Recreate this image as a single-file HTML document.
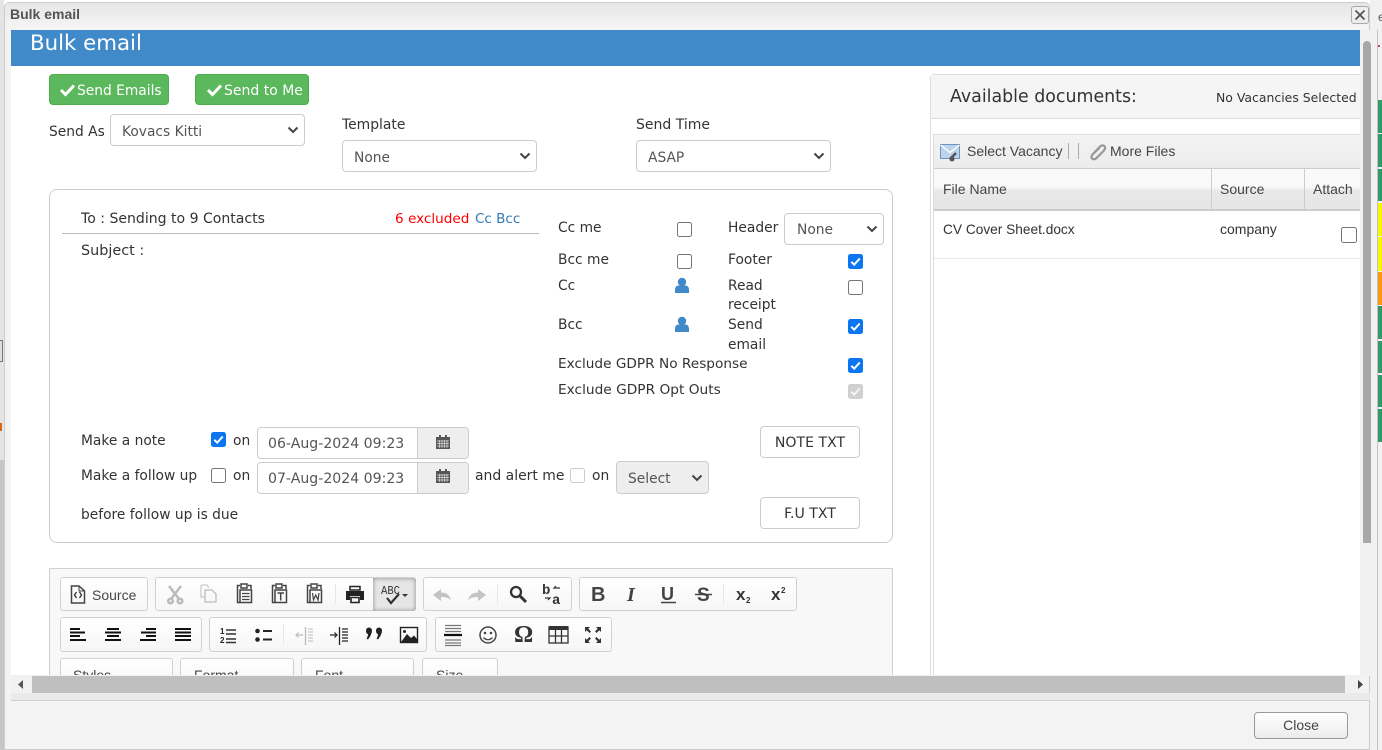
<!DOCTYPE html>
<html><head><meta charset="utf-8"><title>Bulk email</title>
<style>
*{box-sizing:border-box}
html,body{margin:0;padding:0;width:1382px;height:750px;overflow:hidden;background:#fff;font-family:"DejaVu Sans",sans-serif;font-size:13.8px;color:#333}
.a{position:absolute;white-space:nowrap}
.l{position:absolute;white-space:nowrap;line-height:16px;margin-top:1px}
.sel{position:absolute;background:#fff;border:1px solid #ccc;border-radius:4px;color:#555;padding-left:11px;font-size:13.8px}
.sel svg{position:absolute;right:5px;top:50%;margin-top:-4px}
.cb{position:absolute;width:15px;height:15px;border:1.4px solid #767676;border-radius:2.5px;background:#fff}
.cb.on{background:#0b76ef;border:0}
.cb.dis{background:#d0d0d0;border:0}
.cb.on svg,.cb.dis svg{position:absolute;left:0;top:0}
.btn{position:absolute;background:#5cb85c;border:1px solid #4cae4c;border-radius:4px;color:#fff}
.wb{position:absolute;width:100px;height:32px;background:#fff;border:1px solid #ccc;border-radius:4px;text-align:center;line-height:32px;color:#333;font-size:14.1px}
.inp{position:absolute;height:32px;width:212px;background:#fff;border:1px solid #ccc;border-radius:4px;color:#555;padding-left:10px;line-height:32px;font-size:14.1px;overflow:hidden}
.inp i{position:absolute;left:159px;top:0;width:52px;height:32px;background:#eee;border-left:1px solid #ccc}
.grp{position:absolute;border:1px solid #d1d1d1;border-radius:3px;background:linear-gradient(#fff,#f6f6f6)}
svg.i{position:absolute;overflow:visible}
.liber{font-family:"Liberation Sans",sans-serif;font-size:14px}
.th{position:absolute;top:169px;height:42px;background:linear-gradient(#f9f9f9 0,#f9f9f9 45%,#e8e8e8 55%,#e6e6e6);border-bottom:2px solid #ccc;border-right:1px solid #ccc;padding:12px 0 0 8px;color:#444;font-family:"Liberation Sans",sans-serif;font-size:14px}
</style></head>
<body>
<!-- background page strips -->
<div class="a" style="left:0;top:0;width:4px;height:750px;background:#e4e4e4"></div>
<div class="a" style="left:0;top:340px;width:3px;height:22px;border:1px solid #777;border-left:0;background:#ddd"></div>
<div class="a" style="left:0;top:423px;width:2px;height:8px;background:#d2691e"></div>
<div class="a" style="left:0;top:460px;width:4px;height:290px;background:#c6c6c6"></div>
<div class="a" style="left:1370px;top:0;width:12px;height:750px;background:#f1f1f1"></div>
<div class="a" style="left:1377px;top:30px;width:1px;height:720px;background:#c4c4c4"></div>
<div class="a" style="left:1378px;top:45px;width:2px;height:2px;background:#e04060"></div>
<div class="a" style="left:1378px;top:100px;width:4px;height:33px;background:#339966"></div>
<div class="a" style="left:1378px;top:134px;width:4px;height:33px;background:#339966"></div>
<div class="a" style="left:1378px;top:169px;width:4px;height:32px;background:#339966"></div>
<div class="a" style="left:1378px;top:203px;width:4px;height:33px;background:#f7f700"></div>
<div class="a" style="left:1378px;top:237px;width:4px;height:34px;background:#f7f700"></div>
<div class="a" style="left:1378px;top:272px;width:4px;height:33px;background:#f39c12"></div>
<div class="a" style="left:1378px;top:306px;width:4px;height:33px;background:#339966"></div>
<div class="a" style="left:1378px;top:341px;width:4px;height:32px;background:#339966"></div>
<div class="a" style="left:1378px;top:375px;width:4px;height:32px;background:#339966"></div>
<div class="a" style="left:1378px;top:409px;width:4px;height:33px;background:#339966"></div>
<div class="a" style="left:1378px;top:10px;width:4px;height:14px;font:12px/14px 'Liberation Sans',sans-serif;overflow:hidden;color:#555">e</div>

<!-- dialog -->
<div class="a" style="left:4px;top:2px;width:1366px;height:748px;background:#f3f3f3;border:1px solid #ccc;border-radius:5px 5px 0 0"></div>
<div class="a" style="left:5px;top:3px;width:1364px;height:26px;background:linear-gradient(#e6e6e6,#f5f5f5);border-radius:4px 4px 0 0"></div>
<div class="a" style="left:10px;top:6px;font:bold 14px/16px 'Liberation Sans',sans-serif;color:#555">Bulk email</div>
<div class="a" style="left:1351px;top:6px;width:18px;height:18px;border:1px solid #aaa;border-radius:3px;background:#eee"></div>
<svg class="i" style="left:1351px;top:6px" width="18" height="18"><path d="M4.500 4.500L13.500 13.500M13.500 4.500L4.500 13.500" stroke="#555" stroke-width="1.800" fill="none"/></svg>

<!-- content -->
<div class="a" id="content" style="left:11px;top:30px;width:1349px;height:645px;background:#fff;overflow:hidden">
 <div class="a" style="left:0;top:0;width:1349px;height:36px;background:#418aca;color:#fff;font-size:21.3px;line-height:28px;padding-left:19px">Bulk email</div>
</div>
<div class="a" style="left:1360px;top:30px;width:10px;height:646px;background:#f1f1f1"></div>
<div class="a" style="left:1363px;top:41px;width:8px;height:502px;background:#a8a8a8;border-radius:4px 4px 0 0"></div>

<!-- Buttons -->
<div class="btn" style="left:49px;top:74px;width:120px;height:31px"></div>
<svg class="i" style="left:60px;top:83px" width="15" height="13"><path d="M1 7L5.500 11.500L14 2.500" stroke="#fff" stroke-width="3" fill="none"/></svg>
<div class="a" style="left:77px;top:83px;color:#fff;font-size:13.8px;line-height:17px">Send Emails</div>
<div class="btn" style="left:195px;top:74px;width:114px;height:31px"></div>
<svg class="i" style="left:207px;top:83px" width="15" height="13"><path d="M1 7L5.500 11.500L14 2.500" stroke="#fff" stroke-width="3" fill="none"/></svg>
<div class="a" style="left:224px;top:83px;color:#fff;font-size:14px;line-height:17px">Send to Me</div>

<div class="l" style="left:49px;top:123px">Send As</div>
<div class="sel" style="left:110px;top:114px;width:195px;height:32px;line-height:34px;padding-left:11px">Kovacs Kitti<svg width="12" height="8"><path d="M1.500 1.500L6 6L10.500 1.500" stroke="#444" stroke-width="2" fill="none"/></svg></div>
<div class="l" style="left:342px;top:116px;font-size:13.9px">Template</div>
<div class="sel" style="left:342px;top:140px;width:195px;height:32px;line-height:34px">None<svg width="12" height="8"><path d="M1.500 1.500L6 6L10.500 1.500" stroke="#444" stroke-width="2" fill="none"/></svg></div>
<div class="l" style="left:636px;top:116px;font-size:14px">Send Time</div>
<div class="sel" style="left:636px;top:140px;width:195px;height:32px;line-height:34px">ASAP<svg width="12" height="8"><path d="M1.500 1.500L6 6L10.500 1.500" stroke="#444" stroke-width="2" fill="none"/></svg></div>

<!-- main box -->
<div class="a" style="left:49px;top:189px;width:844px;height:354px;border:1px solid #ccc;border-radius:8px"></div>
<div class="l" style="left:81px;top:210px;font-size:14.05px">To : Sending to 9 Contacts</div>
<div class="l" style="left:395px;top:210px;color:#f00;font-size:13.6px">6 excluded</div>
<div class="l" style="left:475px;top:210px;color:#337ab7;font-size:13.5px">Cc Bcc</div>
<div class="a" style="left:62px;top:233px;width:477px;height:1px;background:#bbb"></div>
<div class="l" style="left:81px;top:242px;font-size:14.4px">Subject :</div>

<div class="l" style="left:558px;top:219px">Cc me</div><div class="cb" style="left:677px;top:222px"></div>
<div class="l" style="left:728px;top:219px">Header</div>
<div class="sel" style="left:784px;top:213px;width:100px;height:32px;line-height:33px;padding-left:12px">None<svg width="12" height="8"><path d="M1.500 1.500L6 6L10.500 1.500" stroke="#444" stroke-width="2" fill="none"/></svg></div>
<div class="l" style="left:558px;top:251px">Bcc me</div><div class="cb" style="left:677px;top:254px"></div>
<div class="l" style="left:728px;top:251px">Footer</div>
<div class="cb on" style="left:848px;top:254px"><svg width="15" height="15"><path d="M3.300 7.800L6.200 10.700L11.700 4.500" stroke="#fff" stroke-width="2" fill="none"/></svg></div>
<div class="l" style="left:558px;top:277px">Cc</div>
<svg class="i" style="left:675px;top:278px" width="14" height="16"><circle cx="7" cy="4" r="4.200" fill="#418aca"/><path d="M0 15V11.500Q0 8.500 3 7.500H11Q14 8.500 14 11.500V15Z" fill="#418aca"/></svg>
<div class="l" style="left:728px;top:277px;line-height:19px;white-space:normal;width:60px;margin-top:0">Read receipt</div>
<div class="cb" style="left:848px;top:280px"></div>
<div class="l" style="left:558px;top:316px">Bcc</div>
<svg class="i" style="left:675px;top:317px" width="14" height="16"><circle cx="7" cy="4" r="4.200" fill="#418aca"/><path d="M0 15V11.500Q0 8.500 3 7.500H11Q14 8.500 14 11.500V15Z" fill="#418aca"/></svg>
<div class="l" style="left:728px;top:315px;line-height:20px;white-space:normal;width:60px;margin-top:0">Send email</div>
<div class="cb on" style="left:848px;top:319px"><svg width="15" height="15"><path d="M3.300 7.800L6.200 10.700L11.700 4.500" stroke="#fff" stroke-width="2" fill="none"/></svg></div>
<div class="l" style="left:558px;top:355px;font-size:13.66px">Exclude GDPR No Response</div>
<div class="cb on" style="left:848px;top:358px"><svg width="15" height="15"><path d="M3.300 7.800L6.200 10.700L11.700 4.500" stroke="#fff" stroke-width="2" fill="none"/></svg></div>
<div class="l" style="left:558px;top:381px;font-size:13.72px">Exclude GDPR Opt Outs</div>
<div class="cb dis" style="left:848px;top:384px"><svg width="15" height="15"><path d="M3.300 7.800L6.200 10.700L11.700 4.500" stroke="#f4f4f4" stroke-width="2" fill="none"/></svg></div>

<div class="l" style="left:81px;top:432px">Make a note</div>
<div class="cb on" style="left:211px;top:432px"><svg width="15" height="15"><path d="M3.300 7.800L6.200 10.700L11.700 4.500" stroke="#fff" stroke-width="2" fill="none"/></svg></div>
<div class="l" style="left:233px;top:432px">on</div>
<div class="inp" style="left:257px;top:427px">06-Aug-2024 09:23<i></i></div>
<svg class="i" style="left:436px;top:435px" width="14" height="14"><path d="M0 2H3V0H5V2H9V0H11V2H14V14H0Z" fill="#555"/><path d="M1 6H13M1 8.500H13M1 11H13M3.500 5V13M6 5V13M8.500 5V13M11 5V13" stroke="#ddd" stroke-width=".7"/></svg>
<div class="wb" style="left:760px;top:426px">NOTE TXT</div>

<div class="l" style="left:81px;top:467px">Make a follow up</div>
<div class="cb" style="left:211px;top:468px"></div>
<div class="l" style="left:233px;top:467px">on</div>
<div class="inp" style="left:257px;top:462px">07-Aug-2024 09:23<i></i></div>
<svg class="i" style="left:436px;top:469px" width="14" height="14"><path d="M0 2H3V0H5V2H9V0H11V2H14V14H0Z" fill="#555"/><path d="M1 6H13M1 8.500H13M1 11H13M3.500 5V13M6 5V13M8.500 5V13M11 5V13" stroke="#ddd" stroke-width=".7"/></svg>
<div class="l" style="left:475px;top:467px;font-size:13.95px">and alert me</div>
<div class="cb" style="left:570px;top:468px;border-color:#ccc;border-width:1px"></div>
<div class="l" style="left:592px;top:467px">on</div>
<div class="sel" style="left:616px;top:461px;width:93px;height:33px;line-height:35px;background:#eee">Select<svg width="12" height="8"><path d="M1.500 1.500L6 6L10.500 1.500" stroke="#444" stroke-width="2" fill="none"/></svg></div>
<div class="l" style="left:81px;top:506px">before follow up is due</div>
<div class="wb" style="left:760px;top:497px">F.U TXT</div>

<!-- Right panel -->
<div class="a" style="left:930px;top:74px;width:430px;height:602px;border:1px solid #ddd;border-right:0;border-radius:4px 0 0 0;background:#fff"></div>
<div class="a" style="left:931px;top:75px;width:429px;height:44px;background:#f5f5f5;border-bottom:1px solid #ddd"></div>
<div class="a" style="left:950px;top:87px;font-size:17.4px;line-height:20px;color:#333">Available documents:</div>
<div class="a" style="left:1216px;top:90px;font-size:12.44px;line-height:15px;color:#333">No Vacancies Selected</div>
<div class="a" style="left:933px;top:134px;width:427px;height:542px;border:1px solid #ddd;border-right:0;background:#fff"></div>
<div class="a" style="left:934px;top:135px;width:426px;height:34px;background:linear-gradient(#f3f3f3,#ececec);border-bottom:1px solid #ccc"></div>
<svg class="i" style="left:940px;top:144px" width="21" height="18"><rect x=".5" y=".5" width="19" height="14" fill="#bcd3ec" stroke="#6d93bf"/><path d="M.5 1L10 8.500L19.500 1" stroke="#fff" stroke-width="1.400" fill="none"/><path d="M10 15L16 9" stroke="#555" stroke-width="2.500"/><circle cx="12" cy="15" r="2.500" fill="#555"/></svg>
<div class="a liber" style="left:967px;top:143px;line-height:16px;color:#444">Select Vacancy</div>
<div class="a" style="left:1068px;top:143px;width:1px;height:16px;background:#aaa"></div>
<div class="a" style="left:1078px;top:143px;width:1px;height:16px;background:#aaa"></div>
<svg class="i" style="left:1089px;top:143px" width="18" height="18"><path d="M3 12L11 3.500Q13.500 1.500 15.500 3.200Q17 5 15 7.500L7 15.500Q4.500 17 3 15.500Q1.700 14 3.500 11.500L10.500 5" stroke="#999" stroke-width="2.200" fill="none"/></svg>
<div class="a liber" style="left:1110px;top:143px;line-height:16px;color:#444">More Files</div>
<div class="th" style="left:934px;width:278px;padding-left:9px">File Name</div>
<div class="th" style="left:1212px;width:93px">Source</div>
<div class="th" style="left:1305px;width:55px;border-right:0">Attach</div>
<div class="a liber" style="left:943px;top:221px;line-height:17px;font-size:13.7px">CV Cover Sheet.docx</div>
<div class="a liber" style="left:1220px;top:221px;line-height:16px">company</div>
<div class="cb" style="left:1341px;top:227px;width:16px;height:16px"></div>
<div class="a" style="left:934px;top:258px;width:426px;height:1px;background:#e8e8e8"></div>

<!-- Editor -->
<div class="a" style="left:49px;top:568px;width:844px;height:110px;background:#f8f8f8;border:1px solid #d1d1d1;border-bottom:0"></div>
<div class="grp" style="left:60px;top:577px;width:88px;height:34px"></div>
<div class="grp" style="left:155px;top:577px;width:261px;height:34px"></div>
<div class="a" style="left:373px;top:578px;width:43px;height:33px;background:#e6e6e6;box-shadow:inset 0 0 5px #888;border-radius:0 3px 3px 0"></div>
<div class="grp" style="left:423px;top:577px;width:149px;height:34px"></div>
<div class="grp" style="left:579px;top:577px;width:218px;height:34px"></div>
<div class="grp" style="left:60px;top:617px;width:142px;height:35px"></div>
<div class="grp" style="left:209px;top:617px;width:218px;height:35px"></div>
<div class="grp" style="left:435px;top:617px;width:177px;height:35px"></div>
<div class="grp" style="left:60px;top:658px;width:113px;height:30px"></div>
<div class="grp" style="left:180px;top:658px;width:114px;height:30px"></div>
<div class="grp" style="left:301px;top:658px;width:113px;height:30px"></div>
<div class="grp" style="left:422px;top:658px;width:76px;height:30px"></div>
<div class="a liber" style="left:92px;top:587px;line-height:16px;color:#474747">Source</div>
<div class="a liber" style="left:73px;top:667px;line-height:16px;color:#474747">Styles</div>
<div class="a liber" style="left:194px;top:667px;line-height:16px;color:#474747">Format</div>
<div class="a liber" style="left:315px;top:667px;line-height:16px;color:#474747">Font</div>
<div class="a liber" style="left:436px;top:667px;line-height:16px;color:#474747">Size</div>

<svg class="i" style="left:0;top:0" width="1382" height="750" fill="none">
 <!-- source -->
 <path d="M71.500 586H79L84.500 591V603H71.500Z" stroke="#444" stroke-width="1.500"/><path d="M76.500 592L74.500 595L76.500 598M79.500 592L81.500 595L79.500 598" stroke="#333" stroke-width="1.300"/>
 <path d="M79 586V591H84.500" stroke="#444"/>
 <!-- cut -->
 <g stroke="#bbb" stroke-width="2.500"><path d="M169 586L179 599M181 586L171 599"/><circle cx="170.500" cy="601" r="2.300"/><circle cx="180" cy="601" r="2.300"/></g>
 <!-- copy -->
 <path d="M201 585H207L209 588M201 585V597H204" stroke="#ccc" stroke-width="1.300"/><path d="M205 590H212L216 594V602H205Z" stroke="#bbb" stroke-width="1.300"/>
 <!-- paste x3 -->
 <g stroke="#444" stroke-width="1.500"><path d="M240 585.500H237.500V602.500H240M248 585.500H251V589M241 584H247V588H241Z"/><rect x="240" y="590" width="11.500" height="12.500"/><path d="M242 593.500H249.500M242 596.500H249.500M242 599.500H249.500" stroke-width="1.200"/>
 <path d="M275 585.500H272.500V602.500H275M283 585.500H286V589M276 584H282V588H276Z"/><rect x="275" y="590" width="11.500" height="12.500"/><path d="M277.500 593H284M280.700 593V600.500" stroke-width="1.500"/>
 <path d="M310 585.500H307.500V602.500H310M318 585.500H321V589M311 584H317V588H311Z"/><rect x="310" y="590" width="11.500" height="12.500"/><path d="M312.500 593L313.500 600L315.700 595L318 600L319 593" stroke-width="1.200"/></g>
 <!-- print -->
 <path d="M350 586.500H360V590H350Z" stroke="#222" stroke-width="1.500"/><path d="M346 591H364V600H360V596H350V600H346Z" fill="#222"/><path d="M351 597.500H359V602.500H351Z" stroke="#222" stroke-width="1.600"/>
 <!-- spell -->
 <text x="381" y="594" font-family="Liberation Mono,monospace" font-size="12" fill="#333" textLength="19" lengthAdjust="spacingAndGlyphs">ABC</text>
 <path d="M387 598L391 603L399 594" stroke="#333" stroke-width="2.200"/><path d="M402 594H408L405 597Z" fill="#333"/>
 <!-- undo redo -->
 <path d="M433 595L441 589V592.500Q449 592.500 451 600Q447 596.500 441 597V601Z" fill="#c4c4c4"/>
 <path d="M486 595L478 589V592.500Q470 592.500 468 600Q472 596.500 478 597V601Z" fill="#c4c4c4"/>
 <!-- find -->
 <circle cx="516" cy="592" r="5" stroke="#333" stroke-width="2.300"/><path d="M520 596L526 602" stroke="#333" stroke-width="3"/>
 <!-- replace -->
 <text x="542" y="594" font-family="Liberation Mono,monospace" font-size="14" font-weight="bold" fill="#333">b</text>
 <text x="552" y="604" font-family="Liberation Mono,monospace" font-size="14" font-weight="bold" fill="#333">a</text>
 <path d="M560 588H554L556 586M545 598H550L548 600" stroke="#333" stroke-width="1.200"/>
 <!-- BIUS -->
 <text x="591" y="601" font-family="Liberation Sans,sans-serif" font-size="20" font-weight="bold" fill="#444">B</text>
 <text x="627" y="601" font-family="Liberation Serif,serif" font-size="20" font-style="italic" font-weight="bold" fill="#444">I</text>
 <text x="661" y="600" font-family="Liberation Sans,sans-serif" font-size="18" font-weight="bold" fill="#444">U</text><path d="M661 602.500H676" stroke="#444" stroke-width="1.500"/>
 <text x="697" y="601" font-family="Liberation Sans,sans-serif" font-size="19" fill="#444" font-weight="bold">S</text><path d="M695 594.500H712" stroke="#444" stroke-width="1.500"/>
 <text x="736" y="600" font-family="Liberation Sans,sans-serif" font-size="17" font-weight="bold" fill="#333">x</text><text x="746" y="603" font-family="Liberation Sans,sans-serif" font-size="8" font-weight="bold" fill="#333">2</text>
 <text x="771" y="600" font-family="Liberation Sans,sans-serif" font-size="17" font-weight="bold" fill="#333">x</text><text x="781" y="593" font-family="Liberation Sans,sans-serif" font-size="8" font-weight="bold" fill="#333">2</text>
 <!-- separators -->
 <path d="M335.500 584V604M497.500 584V604M723.500 584V604M283.500 624V644" stroke="#e6e6e6"/>
 <!-- align -->
 <g stroke="#111" stroke-width="2.100">
 <path d="M70 629H80M70 632.500H85M70 636H80M70 640H86"/>
 <path d="M107 629H119M105 632.500H121M107 636H119M105 640H121"/>
 <path d="M146 629H156M141 632.500H156M146 636H156M140 640H156"/>
 <path d="M175 629H191M175 632.500H191M175 636H191M175 640H191"/>
 </g>
 <!-- lists -->
 <text x="220" y="634" font-family="Liberation Sans,sans-serif" font-size="8" font-weight="bold" fill="#222">1</text><text x="220" y="643" font-family="Liberation Sans,sans-serif" font-size="8" font-weight="bold" fill="#222">2</text>
 <path d="M226 630H236M226 634H236M226 639H236M226 642.500H236" stroke="#333" stroke-width="1.400"/>
 <circle cx="257.500" cy="631" r="2.300" fill="#222"/><circle cx="257.500" cy="639.500" r="2.300" fill="#222"/><path d="M263 631H272M263 639.500H272" stroke="#222" stroke-width="2"/>
 <!-- indent -->
 <path d="M305.500 627V645" stroke="#bbb" stroke-width="1.300"/><path d="M296 635H303M298.500 632.500L296 635L298.500 637.500" stroke="#bbb" stroke-width="1.200"/><path d="M308 629H313M308 632H313M308 635H313M308 638H313M308 641H313" stroke="#bbb" stroke-width="1.100"/>
 <path d="M339.500 627V645" stroke="#222" stroke-width="1.300"/><path d="M330 635H337M334.500 632.500L337 635L334.500 637.500" stroke="#222" stroke-width="1.200"/><path d="M342 629H348M342 632H348M342 635H348M342 638H348M342 641H348" stroke="#222" stroke-width="1.200"/>
 <!-- quote -->
 <path d="M366 630.500a3 3 0 1 1 6 0q0 4 -4 9l-1.500 -1q1.500 -2 1.500 -4.500q-2 0 -2 -3.500ZM376 630.500a3 3 0 1 1 6 0q0 4 -4 9l-1.500 -1q1.500 -2 1.500 -4.500q-2 0 -2 -3.500Z" fill="#222"/>
 <!-- image -->
 <rect x="400.500" y="627.500" width="17" height="15" stroke="#222" stroke-width="1.400"/><path d="M401 642L407 634L411 638L414 635.500L417 639V642Z" fill="#222"/><circle cx="404.500" cy="631.500" r="1.500" fill="#222"/>
 <!-- hr -->
 <path d="M445 625.500H461M445 628.500H461M445 631.500H461M445 640H461M445 643H461M445 645.500H461" stroke="#777" stroke-width="1.300"/><path d="M444 635H462" stroke="#111" stroke-width="2.300"/>
 <!-- smiley -->
 <circle cx="488" cy="635" r="8" stroke="#444" stroke-width="1.500"/><circle cx="485" cy="633" r="1.300" fill="#444"/><circle cx="491" cy="633" r="1.300" fill="#444"/><path d="M483.500 637.500Q488 642 492.500 637.500" stroke="#444" stroke-width="1.300"/>
 <!-- table -->
 <rect x="549" y="627" width="19" height="16" stroke="#333" stroke-width="1.300"/><rect x="549" y="626" width="19" height="4" fill="#333"/><path d="M549 636H568M555.500 630V643M561.500 630V643" stroke="#333" stroke-width="1.300"/>
 <!-- maximize -->
 <path d="M585 627H590L588.300 628.700L591 631.500L589.500 633L586.700 630.300L585 632ZM601 627H596L597.700 628.700L595 631.500L596.500 633L599.300 630.300L601 632ZM585 643H590L588.300 641.300L591 638.500L589.500 637L586.700 639.700L585 638ZM601 643H596L597.700 641.300L595 638.500L596.500 637L599.300 639.700L601 638Z" fill="#333"/>
</svg>
<!-- Omega glyph -->
<div class="a" style="left:514px;top:623px;font:bold 24px/24px 'Liberation Serif',serif;color:#333">Ω</div>

<!-- horizontal scrollbar -->
<div class="a" style="left:11px;top:675px;width:1349px;height:18px;background:#f1f1f1"></div>
<div class="a" style="left:32px;top:676px;width:1313px;height:17px;background:#bfbfbf"></div>
<svg class="i" style="left:17px;top:680px" width="8" height="10"><path d="M6 0V9L1 4.500Z" fill="#555"/></svg>
<svg class="i" style="left:1358px;top:680px" width="8" height="10"><path d="M0 0V9L5 4.500Z" fill="#444"/></svg>
<div class="a" style="left:11px;top:693px;width:1359px;height:8px;background:#eaeaea;border-bottom:1px solid #d0d0d0"></div>

<!-- close -->
<div class="a" style="left:1254px;top:712px;width:94px;height:27px;border:1px solid #999;border-radius:4px;background:linear-gradient(#fff,#ececec);text-align:center;font:14px/24px 'Liberation Sans',sans-serif;color:#444">Close</div>
</body></html>
